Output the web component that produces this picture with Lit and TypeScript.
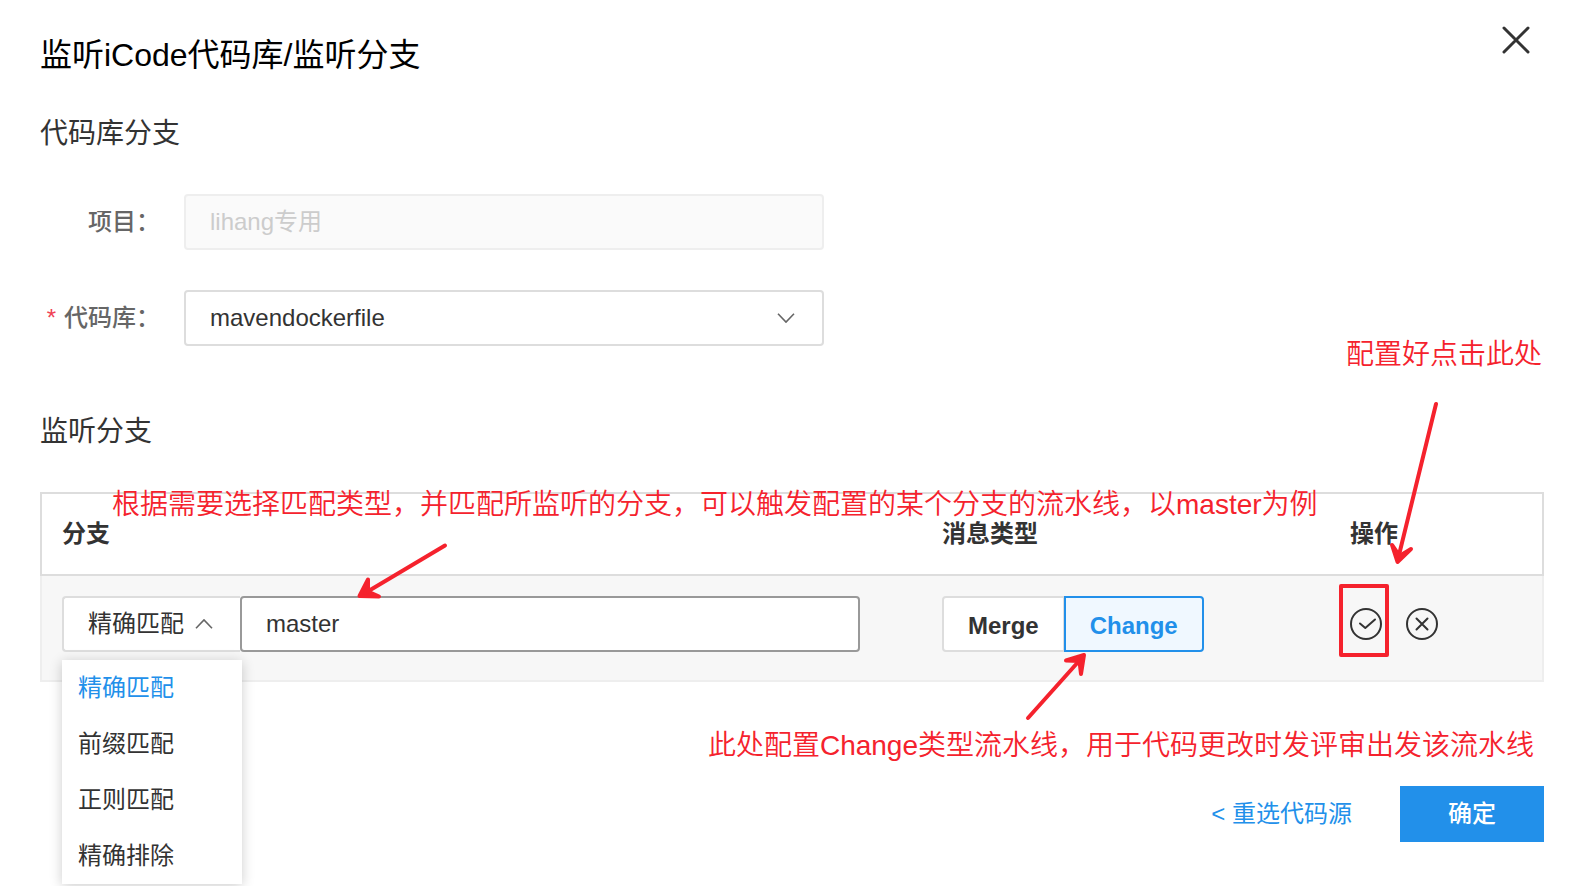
import { LitElement, html, svg, css } from "lit";
import { customElement, state } from "lit/decorators.js";
import { classMap } from "lit/directives/class-map.js";

const MATCH_TYPES = ["精确匹配", "前缀匹配", "正则匹配", "精确排除"];
const REPOS = ["mavendockerfile"];
const MESSAGE_TYPES = ["Merge", "Change"];

const chevron = (up: boolean) => html`
  <svg class="chevron" viewBox="0 0 18 10" width="18" height="10" aria-hidden="true">
    ${up
      ? svg`<path d="M1 9.2 9 .9 17 9.2" />`
      : svg`<path d="M1 .8 9 9.1 17 .8" />`}
  </svg>`;

@customElement("app-root")
export class AppRoot extends LitElement {
  @state() private matchType = MATCH_TYPES[0];
  @state() private messageType = "Change";

  static styles = css`
    :host {
      display: block;
      --text: #333;
      --blue: #2290ea;
      --line: #ddd;
      --mark: #f5222d;
      font-family: "Liberation Sans", "Noto Sans CJK SC", sans-serif;
      font-size: 24px;
      line-height: 36px;
      color: var(--text);
      background: #fff;
    }
    * {
      box-sizing: border-box;
    }
    button,
    input,
    select {
      font: inherit;
      color: inherit;
      margin: 0;
      outline: none;
    }
    button {
      cursor: pointer;
    }
    .dialog {
      padding: 24px 42px 44px 40px;
    }
    .top {
      display: flex;
      justify-content: space-between;
      align-items: flex-start;
    }
    h1 {
      margin: 7px 0 0;
      font-size: 32px;
      line-height: 48px;
      font-weight: 400;
      color: #000;
    }
    h2 {
      margin: 0 0 40px;
      font-size: 28px;
      line-height: 40px;
      font-weight: 400;
    }
    .close {
      display: flex;
      padding: 0;
      margin-right: 12px;
      border: 0;
      background: none;
    }
    .close path {
      stroke: var(--text);
      stroke-width: 3;
      stroke-linecap: round;
    }
    .repo {
      margin-top: 35px;
    }
    .branches {
      margin-top: 66px;
    }
    .field {
      display: grid;
      grid-template-columns: 120px minmax(0, 640px);
      column-gap: 24px;
      align-items: center;
    }
    .field + .field {
      margin-top: 40px;
    }
    .field label {
      text-align: right;
      font-weight: 500;
      color: #666;
      white-space: nowrap;
    }
    .required {
      margin-right: 8px;
      font-weight: 400;
      color: #f04155;
    }
    .box {
      display: block;
      width: 100%;
      height: 56px;
      padding: 0 24px;
      border: 2px solid var(--line);
      border-radius: 4px;
      background: #fff;
      appearance: none;
    }
    .box:disabled {
      padding-bottom: 5px;
      border-color: #eee;
      background: #fafafa;
      color: #ccc;
      opacity: 1;
    }
    .select {
      position: relative;
    }
    .chevron {
      position: absolute;
      right: 29px;
      top: 23px;
      fill: none;
      stroke: #666;
      stroke-width: 1.6;
      pointer-events: none;
    }
    table {
      width: 100%;
      table-layout: fixed;
      border-collapse: separate;
      border-spacing: 0;
    }
    .col-type {
      width: 408px;
    }
    .col-action {
      width: 214px;
    }
    th {
      height: 84px;
      padding: 0 20px;
      border: solid var(--line);
      border-width: 2px 0;
      text-align: left;
      font-weight: 700;
      position: relative;
    }
    td {
      padding: 20px 20px 28px;
      border: solid #eee;
      border-width: 0 0 2px;
      background: #f7f7f7;
      position: relative;
    }
    th:first-child,
    td:first-child {
      border-left-width: 2px;
    }
    th:last-child,
    td:last-child {
      border-right-width: 2px;
    }
    .match {
      display: flex;
    }
    .match .select {
      flex: none;
      width: 178px;
    }
    .match .select .box {
      border-right: 0;
      border-radius: 4px 0 0 4px;
    }
    .match .chevron {
      right: 27px;
    }
    .pattern {
      flex: 0 1 620px;
      min-width: 0;
      border-color: #999;
    }
    .menu {
      position: absolute;
      z-index: 2;
      top: 64px;
      left: 0;
      width: 180px;
      margin: 0;
      padding: 0;
      list-style: none;
      background: #fff;
      box-shadow: 0 2px 12px rgba(0, 0, 0, 0.2);
    }
    .menu li {
      padding: 10px 16px;
      cursor: pointer;
    }
    .menu .current {
      color: var(--blue);
    }
    .segments {
      display: flex;
    }
    .segments button {
      height: 56px;
      padding: 3px 24px 0;
      border: 2px solid var(--line);
      background: #fff;
      font-weight: 700;
    }
    .segments button:first-child {
      border-radius: 4px 0 0 4px;
      border-right-width: 1px;
    }
    .segments button:last-child {
      border-radius: 0 4px 4px 0;
    }
    .segments .on {
      border-color: var(--blue);
      background: #f0f8ff;
      color: var(--blue);
    }
    .actions {
      display: flex;
      gap: 24px;
    }
    .actions button {
      display: flex;
      padding: 0;
      border: 0;
      background: none;
    }
    .actions svg {
      fill: none;
      stroke: var(--text);
      stroke-width: 2;
      stroke-linecap: round;
      stroke-linejoin: round;
    }
    .footer {
      display: flex;
      justify-content: flex-end;
      align-items: center;
      gap: 48px;
      margin-top: 104px;
    }
    .footer a {
      color: var(--blue);
      text-decoration: none;
    }
    .confirm {
      width: 144px;
      height: 56px;
      border: 0;
      background: var(--blue);
      color: #fff;
      font-weight: 500;
    }
    .note {
      position: absolute;
      z-index: 3;
      margin: 0;
      font-size: 28px;
      line-height: 40px;
      font-weight: 350;
      color: var(--mark);
      white-space: nowrap;
      pointer-events: none;
    }
    .arrow {
      position: absolute;
      z-index: 3;
      fill: none;
      stroke: var(--mark);
      stroke-width: 4;
      stroke-linecap: round;
      stroke-linejoin: round;
      pointer-events: none;
    }
    .arrow .head {
      fill: var(--mark);
    }
    .note-match {
      left: 70px;
      top: -9px;
    }
    .arrow-match {
      left: 308px;
      top: 46px;
    }
    .note-type {
      right: -204px;
      top: 150px;
    }
    .arrow-type {
      left: 98px;
      top: 70px;
    }
    .note-confirm {
      right: 0;
      top: -159px;
    }
    .arrow-confirm {
      left: 50px;
      top: -96px;
    }
    .frame {
      position: absolute;
      z-index: 3;
      left: 9px;
      top: 8px;
      width: 50px;
      height: 73px;
      border: 4px solid var(--mark);
      border-radius: 2px;
      pointer-events: none;
    }
  `;

  private pickMatch(event: Event) {
    this.matchType = (event.target as HTMLSelectElement).value;
  }

  render() {
    return html`
      <main class="dialog">
        <header class="top">
          <h1>监听iCode代码库/监听分支</h1>
          <button class="close" type="button" aria-label="关闭">
            <svg viewBox="0 0 32 32" width="32" height="32" fill="none">
              <path d="M4 4 28 28M28 4 4 28" />
            </svg>
          </button>
        </header>

        <section class="repo">
          <h2>代码库分支</h2>
          <div class="field">
            <label for="project">项目：</label>
            <input id="project" class="box" type="text" value="lihang专用" disabled />
          </div>
          <div class="field">
            <label for="repo"><span class="required">*</span>代码库：</label>
            <div class="select">
              <select id="repo" class="box">
                ${REPOS.map((repo) => html`<option>${repo}</option>`)}
              </select>
              ${chevron(false)}
            </div>
          </div>
        </section>

        <section class="branches">
          <h2>监听分支</h2>
          <table>
            <colgroup>
              <col />
              <col class="col-type" />
              <col class="col-action" />
            </colgroup>
            <thead>
              <tr>
                <th scope="col">
                  分支
                  <p class="note note-match">
                    根据需要选择匹配类型，并匹配所监听的分支，可以触发配置的某个分支的流水线，以master为例
                  </p>
                  <svg class="arrow arrow-match" width="100" height="60" viewBox="350 540 100 60">
                    <path d="M445 545.500 366 592.500" />
                    <path class="head" d="M368 579.500 359.500 596 379 596.500 368 591.500Z" />
                  </svg>
                </th>
                <th scope="col">消息类型</th>
                <th scope="col">
                  操作
                  <p class="note note-confirm">配置好点击此处</p>
                  <svg class="arrow arrow-confirm" width="60" height="172" viewBox="1380 398 60 172">
                    <path d="M1436 404 1399 555" />
                    <path class="head" d="M1392 545 1397.500 562 1411 549 1399.500 556Z" />
                  </svg>
                </th>
              </tr>
            </thead>
            <tbody>
              <tr>
                <td>
                  <div class="match">
                    <div class="select">
                      <select class="box" aria-label="匹配类型" @change=${this.pickMatch}>
                        ${MATCH_TYPES.map(
                          (type) => html`<option ?selected=${type === this.matchType}>${type}</option>`
                        )}
                      </select>
                      ${chevron(true)}
                      <ul class="menu" role="listbox" aria-label="匹配类型">
                        ${MATCH_TYPES.map(
                          (type) => html`<li
                            role="option"
                            aria-selected=${type === this.matchType}
                            class=${classMap({ current: type === this.matchType })}
                            @click=${() => (this.matchType = type)}
                          >${type}</li>`
                        )}
                      </ul>
                    </div>
                    <input class="box pattern" type="text" aria-label="分支" value="master" />
                  </div>
                </td>
                <td>
                  <div class="segments" role="group" aria-label="消息类型">
                    ${MESSAGE_TYPES.map(
                      (type) => html`<button
                        type="button"
                        aria-pressed=${type === this.messageType}
                        class=${classMap({ on: type === this.messageType })}
                        @click=${() => (this.messageType = type)}
                      >${type}</button>`
                    )}
                  </div>
                  <svg class="arrow arrow-type" width="80" height="80" viewBox="1020 646 80 80">
                    <path d="M1028 718 1079 661" />
                    <path class="head" d="M1066 660.500 1084 655 1081 674 1079.500 661Z" />
                  </svg>
                  <p class="note note-type">此处配置Change类型流水线，用于代码更改时发评审出发该流水线</p>
                </td>
                <td>
                  <div class="actions">
                    <button type="button" aria-label="保存">
                      <svg viewBox="0 0 32 32" width="32" height="32">
                        <circle cx="16" cy="16" r="15" />
                        <path d="M10 15.500 15.300 20 25 11.500" />
                      </svg>
                    </button>
                    <button type="button" aria-label="取消">
                      <svg viewBox="0 0 32 32" width="32" height="32">
                        <circle cx="16" cy="16" r="15" />
                        <path d="M10.500 10.500 21.500 21.500M21.500 10.500 10.500 21.500" />
                      </svg>
                    </button>
                  </div>
                  <span class="frame"></span>
                </td>
              </tr>
            </tbody>
          </table>
        </section>

        <footer class="footer">
          <a href="#source">&lt; 重选代码源</a>
          <button class="confirm" type="button">确定</button>
        </footer>
      </main>
    `;
  }
}
